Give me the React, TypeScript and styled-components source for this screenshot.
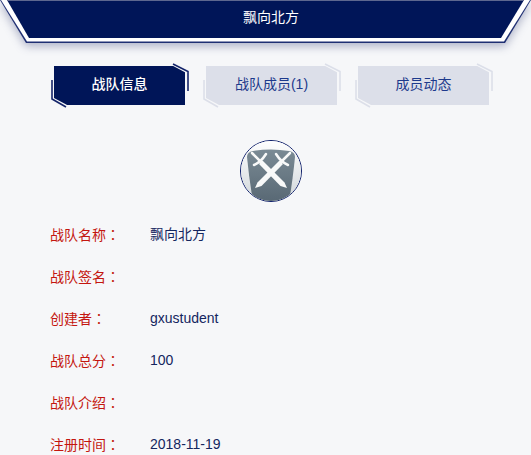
import styled, { createGlobalStyle } from 'styled-components';

const GlobalStyle = createGlobalStyle`
  html, body {
    margin: 0;
    padding: 0;
    background: #f6f7f9;
    overflow: hidden;
  }
  body {
    font-family: "Liberation Sans", "Noto Sans CJK SC", sans-serif;
    font-size: 14px;
  }
`

const Page = styled.div`
  width: 531px;
  height: 455px;
  overflow: hidden;
`

const Header = styled.header`
  position: relative;
  box-sizing: border-box;
  height: 38px;
  padding: 0 0 6px 11px;
  margin-bottom: 28px;
  display: flex;
  align-items: center;
  justify-content: center;
  color: #fff;
`

const HeaderShape = styled.svg`
  position: absolute;
  left: 0;
  top: 0;
  z-index: 0;
  filter: drop-shadow(0 3px 5px rgba(30, 40, 100, 0.35));
`

const HeaderTitle = styled.h1`
  position: relative;
  z-index: 1;
  margin: 0;
  font-size: 14px;
  font-weight: 400;
`

const Tabs = styled.nav`
  display: flex;
  gap: 21px;
  padding-left: 54px;
  margin-bottom: 35px;
`

const Tab = styled.div<{ $active?: boolean }>`
  position: relative;
  box-sizing: border-box;
  width: 131px;
  height: 39px;
  padding-bottom: 6px;
  display: flex;
  align-items: center;
  justify-content: center;
  color: ${p => (p.$active ? '#fff' : '#1d3a8c')};
  font-weight: ${p => (p.$active ? 500 : 400)};
  isolation: isolate;
  &::before {
    content: '';
    position: absolute;
    inset: 0;
    z-index: -1;
    background: ${p => (p.$active ? '#001558' : '#dcdfe9')};
    clip-path: polygon(0 0, 91% 0, 100% 16%, 100% 100%, 10% 100%, 0 82%);
  }
`

const TabCorners = styled.svg`
  position: absolute;
  left: -3px;
  top: -3px;
  overflow: visible;
  fill: none;
  stroke-width: 1.6;
`

const Avatar = styled.div`
  width: 62px;
  height: 62px;
  margin: 0 auto 21px;
  position: relative;
  left: 5.5px;
  box-sizing: border-box;
  border: 1px solid #0b1c68;
  border-radius: 50%;
  background: #fff;
  overflow: hidden;
`

const Rows = styled.dl`
  margin: 0;
  padding-left: 50px;
`

const Row = styled.div`
  display: flex;
  height: 42px;
  line-height: 22px;
`

const Label = styled.dt`
  width: 100px;
  color: #c4160f;
`

const Colon = styled.span`
  font-family: "Noto Sans CJK TC", sans-serif;
`

const Value = styled.dd`
  margin: 0;
  color: #14265f;
`

const tabs = [
  { name: '战队信息', active: true },
  { name: '战队成员(1)', active: false },
  { name: '成员动态', active: false },
]

const rows = [
  ['战队名称', '飘向北方'],
  ['战队签名', ''],
  ['创建者', 'gxustudent'],
  ['战队总分', '100'],
  ['战队介绍', ''],
  ['注册时间', '2018-11-19'],
]

const App = () => {
  return (
    <Page>
      <GlobalStyle />
      <Header>
        <HeaderShape width="531" height="50" viewBox="0 0 531 50">
          <polygon points="0,0 531,0 505,43 26,43" fill="#1f2f73" />
          <polygon points="1,0 530,0 504,41.5 27,41.5" fill="#fff" />
          <polygon points="7,0 524,0 501,38 29,38" fill="#001558" />
          <rect x="7" y="0" width="517" height="1" fill="#5d678f" />
        </HeaderShape>
        <HeaderTitle>飘向北方</HeaderTitle>
      </Header>

      <Tabs>
        {tabs.map(tab => (
          <Tab key={tab.name} $active={tab.active}>
            <TabCorners width="137" height="46" viewBox="0 0 137 46" stroke={tab.active ? '#14246a' : '#dcdfe9'}>
              <polyline points="122,1 137,8.5 137,28" />
              <polyline points="1,17 1,36 15,44" />
            </TabCorners>
            {tab.name}
          </Tab>
        ))}
      </Tabs>

      <Avatar>
        <svg width="60" height="60" viewBox="1 1 60 60">
          <defs>
            <linearGradient id="shield" x1="0" y1="0" x2="0" y2="1">
              <stop offset="0" stopColor="#7b8b95" />
              <stop offset="1" stopColor="#586874" />
            </linearGradient>
            <linearGradient id="wedge" x1="0" y1="0" x2="0" y2="1">
              <stop offset="0" stopColor="#fff" />
              <stop offset="1" stopColor="#cfd5d9" />
            </linearGradient>
          </defs>
          <rect x="0" y="0" width="62" height="62" fill="url(#wedge)" />
          <path d="M13 11 Q31 8 49 11 Q55 12 55 17 Q53 38 49 62 L13 62 Q9 38 7 17 Q7 12 13 11 Z" fill="url(#shield)" />
          <g fill="#f8f9f9">
            <polygon points="15,48 17.5,42.5 39.5,20.5 43,24 21.5,46" />
            <polygon points="47,48 44.5,42.5 22.5,20.5 19,24 40.5,46" />
          </g>
          <g fill="none" stroke="#f8f9f9" strokeLinecap="round" strokeWidth="2.5">
            <path d="M41 22 L50 13" />
            <path d="M36 14 Q41 22 48 25" />
            <path d="M21 22 L12 13" />
            <path d="M26 14 Q21 22 14 25" />
          </g>
        </svg>
      </Avatar>

      <Rows>
        {rows.map(([label, value]) => (
          <Row key={label}>
            <Label>{label}<Colon>：</Colon></Label>
            <Value>{value}</Value>
          </Row>
        ))}
      </Rows>
    </Page>
  )
}

export default App;
